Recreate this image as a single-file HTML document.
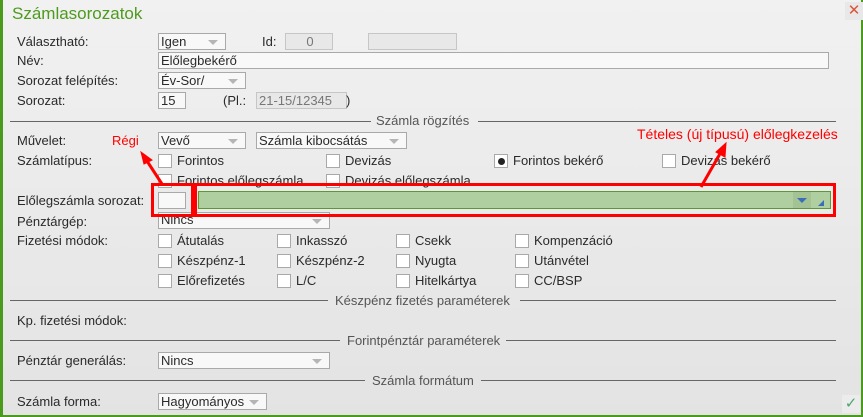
<!DOCTYPE html>
<html><head><meta charset="utf-8"><style>
*{box-sizing:border-box;margin:0;padding:0}
body{width:863px;height:417px;overflow:hidden;font-family:"Liberation Sans",sans-serif;font-size:13px;color:#2a2a2a}
#w{position:absolute;left:0;top:0;width:863px;height:417px;background:linear-gradient(#f1f1f1,#e3e3e3);border-left:3px solid #4a9a1c;border-right:2px solid #4a9a1c;border-bottom:2px solid #4a9a1c}
.a{position:absolute;white-space:nowrap;line-height:14px}
.l{position:absolute;white-space:nowrap;line-height:14px;left:14px}
.in{position:absolute;background:#f8f8f8;border:1px solid #a9a9a9;height:17px;line-height:15px;padding-left:2px;font-size:13px}
.dis{background:#e8e8e8;border-color:#c6c6c6;color:#777}
.sel:after{content:"";position:absolute;right:7px;top:6px;border-left:5px solid transparent;border-right:5px solid transparent;border-top:5px solid #b5b5b5}
.cb{position:absolute;width:14px;height:14px;background:#fff;border:1px solid #a9a9a9}
.sep{position:absolute;height:1px;background:#666}
.st{position:absolute;color:#555;line-height:14px;white-space:nowrap}
.red{position:absolute;border:3px solid #f00}
</style></head><body><div id="w">
<div class="a" style="left:9px;top:4px;font-size:17px;line-height:19px;color:#4e9a1e">Számlasorozatok</div>
<div class="a" style="left:842px;top:2px;width:18px;height:18px;background:#e8e8e8;color:#d9573a;font-size:15px;text-align:center;line-height:18px">✕</div>

<div class="l" style="top:35px">Választható:</div>
<div class="in sel" style="left:155px;top:33px;width:68px">Igen</div>
<div class="a" style="left:259px;top:35px">Id:</div>
<div class="in dis" style="left:282px;top:33px;width:48px;text-align:center">0</div>
<div class="in dis" style="left:365px;top:33px;width:89px"></div>

<div class="l" style="top:54px">Név:</div>
<div class="in" style="left:155px;top:52px;width:671px">Előlegbekérő</div>
<div class="l" style="top:74px">Sorozat felépítés:</div>
<div class="in sel" style="left:155px;top:72px;width:88px">Év-Sor/</div>
<div class="l" style="top:94px">Sorozat:</div>
<div class="in" style="left:155px;top:92px;width:28px">15</div>
<div class="a" style="left:220px;top:94px">(Pl.:</div>
<div class="in dis" style="left:253px;top:92px;width:91px">21-15/12345</div>
<div class="a" style="left:343px;top:94px">)</div>

<div class="sep" style="left:7px;top:121px;width:361px"></div>
<div class="st" style="left:373px;top:114px">Számla rögzítés</div>
<div class="sep" style="left:475px;top:121px;width:358px"></div>

<div class="l" style="top:134px">Művelet:</div>
<div class="a" style="left:109px;top:134px;color:#f00">Régi</div>
<div class="in sel" style="left:155px;top:132px;width:88px">Vevő</div>
<div class="in sel" style="left:253px;top:132px;width:151px">Számla kibocsátás</div>
<div class="a" style="left:634px;top:127px;color:#f00;font-size:14px">Tételes (új típusú) előlegkezelés</div>

<div class="l" style="top:154px">Számlatípus:</div>
<div class="cb" style="left:155px;top:154px"></div><div class="a" style="left:174px;top:154px">Forintos</div>
<div class="cb" style="left:323px;top:154px"></div><div class="a" style="left:342px;top:154px">Devizás</div>
<div class="cb" style="left:491px;top:154px"></div><div class="a" style="left:495px;top:158px;width:7px;height:7px;border-radius:50%;background:#222"></div><div class="a" style="left:510px;top:154px">Forintos bekérő</div>
<div class="cb" style="left:659px;top:154px"></div><div class="a" style="left:678px;top:154px">Devizás bekérő</div>
<div class="cb" style="left:155px;top:174px"></div><div class="a" style="left:174px;top:174px">Forintos előlegszámla</div>
<div class="cb" style="left:323px;top:174px"></div><div class="a" style="left:342px;top:174px">Devizás előlegszámla</div>

<div class="l" style="top:194px">Előlegszámla sorozat:</div>
<div class="in" style="left:155px;top:192px;width:28px;background:#f8f8f8"></div>
<div class="in" style="left:195px;top:191px;width:633px;height:18px;background:#b0cfa0;border-color:#5a9a30"></div>
<div class="a" style="left:790px;top:192px;width:18px;height:16px;background:#a3c395"></div>
<div class="a" style="left:794px;top:198px;border-left:5px solid transparent;border-right:5px solid transparent;border-top:5px solid #3a6fb8"></div>
<div class="a" style="left:815px;top:200px;border-left:6px solid transparent;border-bottom:6px solid #3a6fb8"></div>

<div class="l" style="top:215px">Pénztárgép:</div>
<div class="in sel" style="left:155px;top:212px;width:172px;line-height:13px">Nincs</div>
<div class="red" style="left:148px;top:183px;width:43px;height:34px"></div>
<div class="red" style="left:191px;top:183px;width:642px;height:34px"></div>

<div class="l" style="top:234px">Fizetési módok:</div>
<div class="cb" style="left:155px;top:234px"></div><div class="a" style="left:174px;top:234px">Átutalás</div>
<div class="cb" style="left:274px;top:234px"></div><div class="a" style="left:293px;top:234px">Inkasszó</div>
<div class="cb" style="left:393px;top:234px"></div><div class="a" style="left:412px;top:234px">Csekk</div>
<div class="cb" style="left:512px;top:234px"></div><div class="a" style="left:531px;top:234px">Kompenzáció</div>
<div class="cb" style="left:155px;top:254px"></div><div class="a" style="left:174px;top:254px">Készpénz-1</div>
<div class="cb" style="left:274px;top:254px"></div><div class="a" style="left:293px;top:254px">Készpénz-2</div>
<div class="cb" style="left:393px;top:254px"></div><div class="a" style="left:412px;top:254px">Nyugta</div>
<div class="cb" style="left:512px;top:254px"></div><div class="a" style="left:531px;top:254px">Utánvétel</div>
<div class="cb" style="left:155px;top:274px"></div><div class="a" style="left:174px;top:274px">Előrefizetés</div>
<div class="cb" style="left:274px;top:274px"></div><div class="a" style="left:293px;top:274px">L/C</div>
<div class="cb" style="left:393px;top:274px"></div><div class="a" style="left:412px;top:274px">Hitelkártya</div>
<div class="cb" style="left:512px;top:274px"></div><div class="a" style="left:531px;top:274px">CC/BSP</div>

<div class="sep" style="left:7px;top:300px;width:318px"></div>
<div class="st" style="left:332px;top:294px">Készpénz fizetés paraméterek</div>
<div class="sep" style="left:517px;top:300px;width:316px"></div>
<div class="l" style="top:314px">Kp. fizetési módok:</div>

<div class="sep" style="left:7px;top:340px;width:330px"></div>
<div class="st" style="left:344px;top:334px">Forintpénztár paraméterek</div>
<div class="sep" style="left:503px;top:340px;width:330px"></div>
<div class="l" style="top:354px">Pénztár generálás:</div>
<div class="in sel" style="left:155px;top:352px;width:172px">Nincs</div>

<div class="sep" style="left:7px;top:380px;width:355px"></div>
<div class="st" style="left:369px;top:374px">Számla formátum</div>
<div class="sep" style="left:478px;top:380px;width:355px"></div>
<div class="l" style="top:395px">Számla forma:</div>
<div class="in sel" style="left:155px;top:393px;width:109px">Hagyományos</div>

<div class="a" style="left:839px;top:395px;width:18px;height:18px;background:#ececec;color:#4aa86a;font-size:15px;text-align:center;line-height:18px">✓</div>

<svg class="a" style="left:-3px;top:0" width="863" height="417">
<g stroke="#f00" stroke-width="3" fill="#f00">
<line x1="162" y1="184" x2="147" y2="161"/>
<polygon points="141,152 152,160 144,164" stroke-width="1"/>
<line x1="701" y1="187" x2="721" y2="152"/>
<polygon points="726,143 725,157 716,152" stroke-width="1"/>
</g></svg>
</div></body></html>
